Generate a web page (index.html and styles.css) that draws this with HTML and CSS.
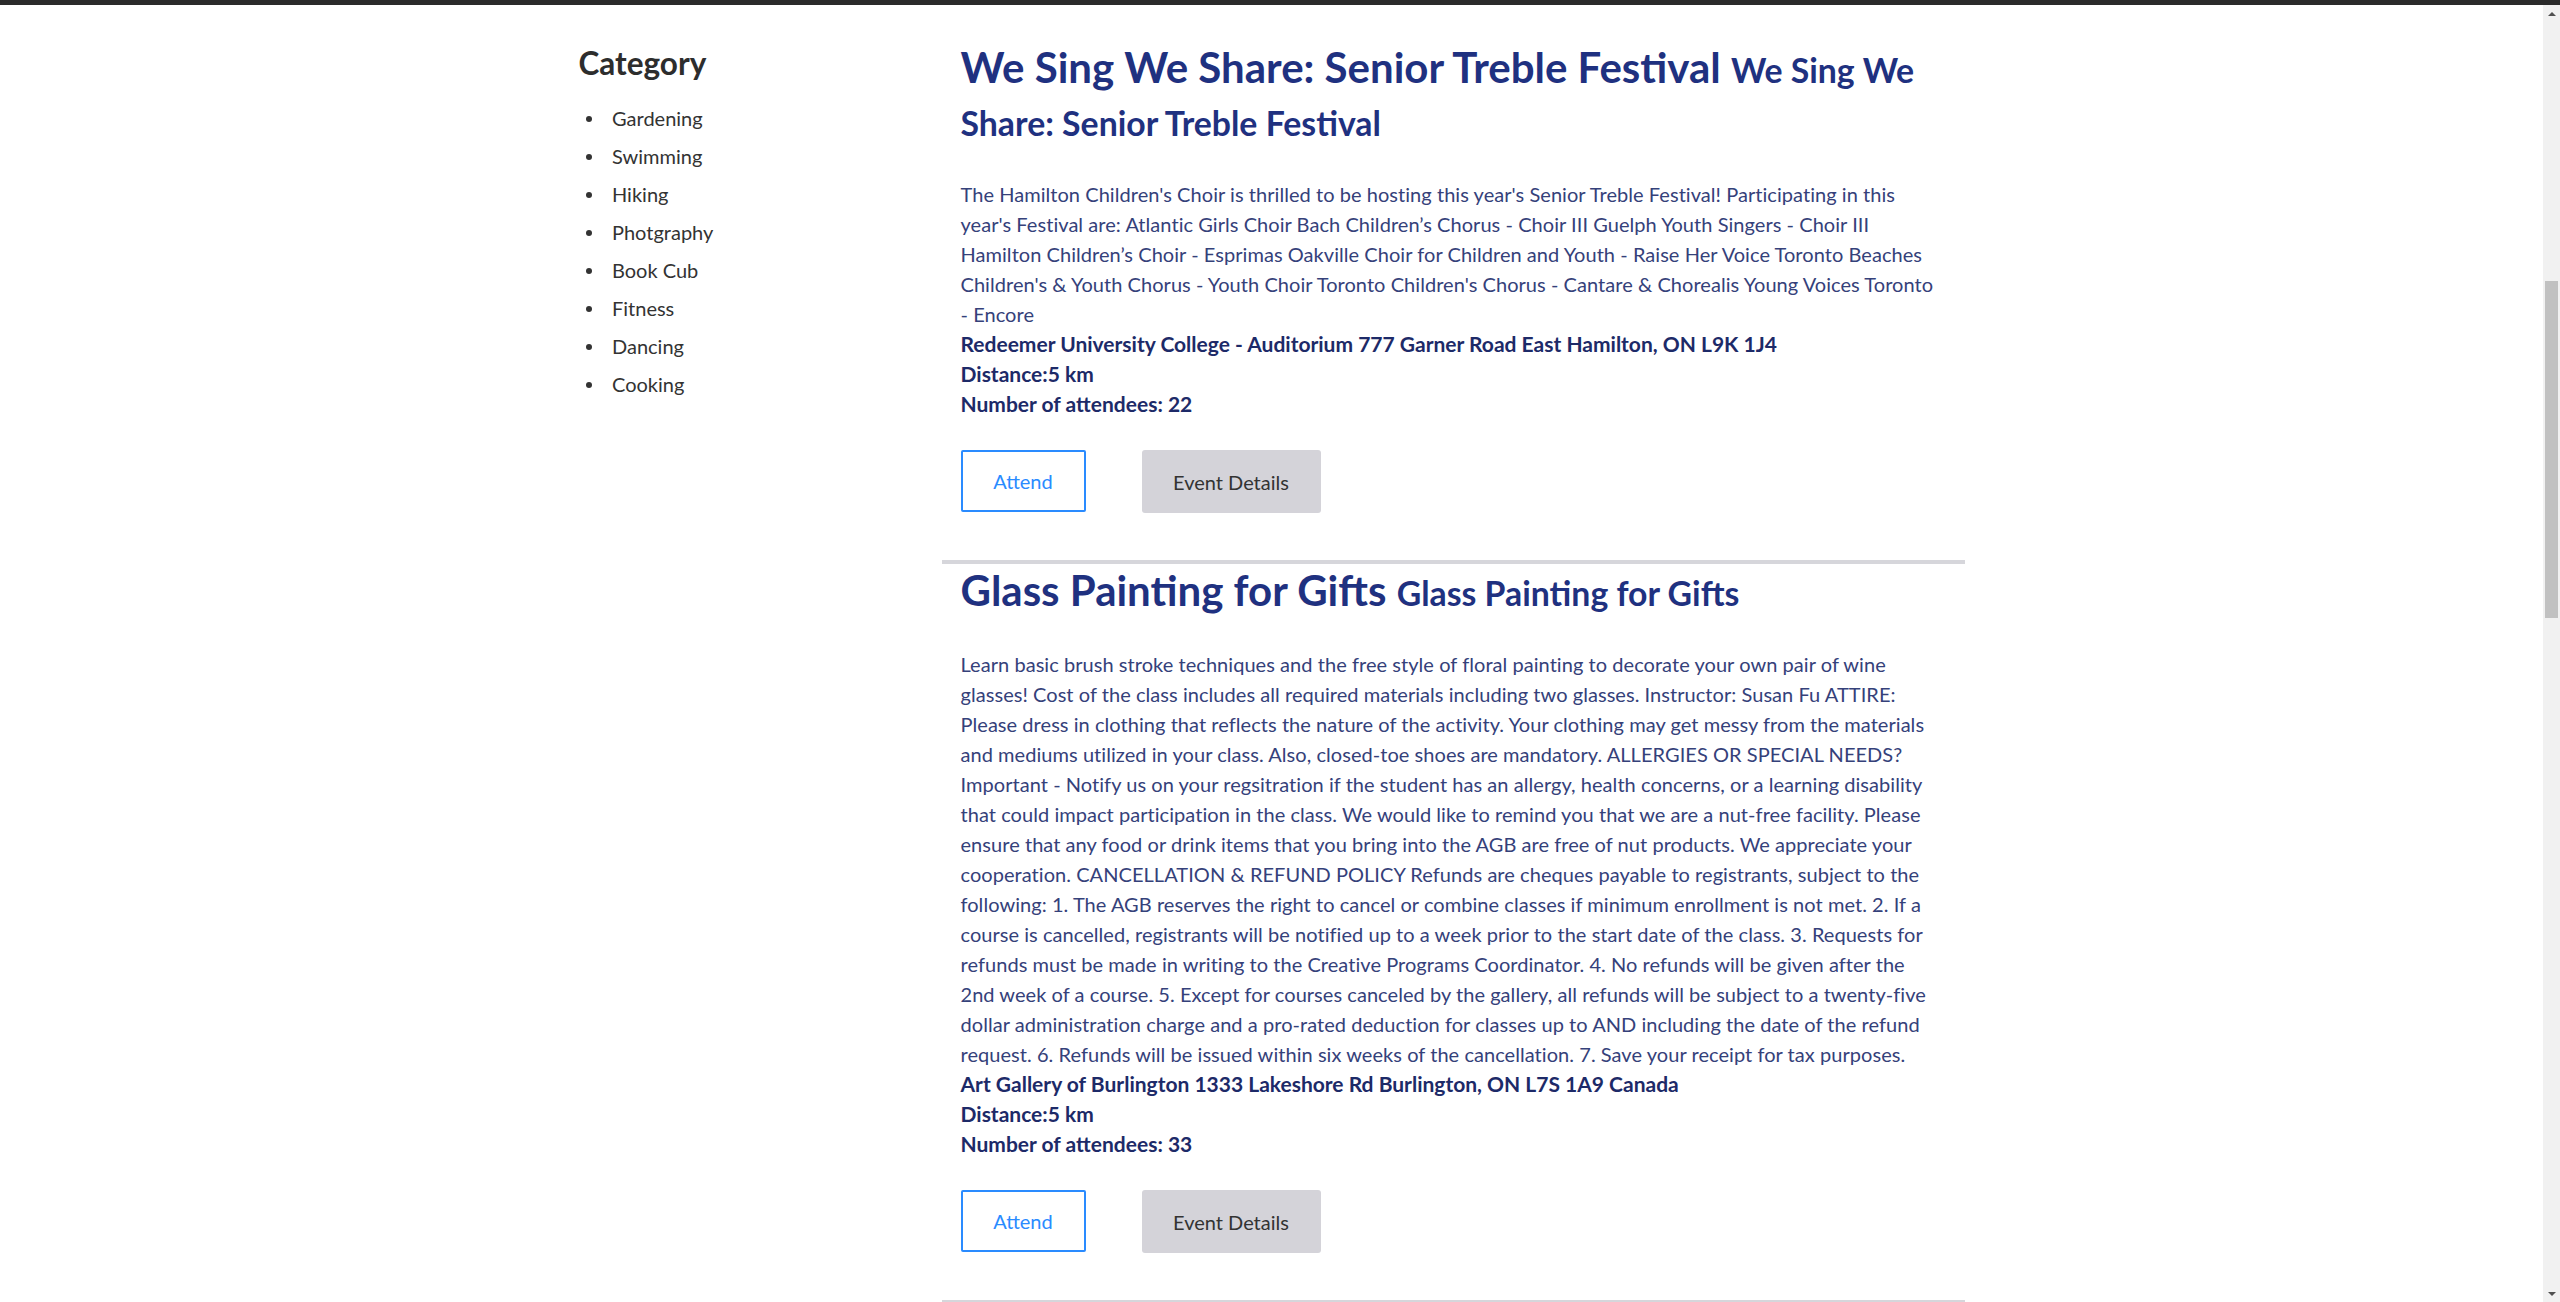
FILE: index.html
```html
<!DOCTYPE html>
<html lang="en">
<head>
<meta charset="utf-8">
<title>Events</title>
<link rel="stylesheet" href="styles.css">
</head>
<body>
<div class="topbar"></div>
<div class="viewport">
  <div class="page">
    <div class="container">
      <aside class="sidebar">
        <h3 class="cat-title">Category</h3>
        <ul class="cat-list">
          <li>Gardening</li>
          <li>Swimming</li>
          <li>Hiking</li>
          <li>Photgraphy</li>
          <li>Book Cub</li>
          <li>Fitness</li>
          <li>Dancing</li>
          <li>Cooking</li>
        </ul>
      </aside>
      <main class="events">
        <section class="event">
          <h2 class="event-title">We Sing We Share: Senior Treble Festival <span class="event-sub">We Sing We Share: Senior Treble Festival</span></h2>
          <p class="event-desc">The Hamilton Children's Choir is thrilled to be hosting this year's Senior Treble Festival! Participating in this year's Festival are: Atlantic Girls Choir Bach Children’s Chorus - Choir III Guelph Youth Singers - Choir III Hamilton Children’s Choir - Esprimas Oakville Choir for Children and Youth - Raise Her Voice Toronto Beaches Children's &amp; Youth Chorus - Youth Choir Toronto Children's Chorus - Cantare &amp; Chorealis Young Voices Toronto <span class="nowrap">- Encore</span></p>
          <div class="event-info">Redeemer University College - Auditorium 777 Garner Road East Hamilton, ON L9K 1J4</div>
          <div class="event-info">Distance:5 km</div>
          <div class="event-info">Number of attendees: 22</div>
          <div class="event-actions">
            <button class="btn btn-attend">Attend</button>
            <button class="btn btn-details">Event Details</button>
          </div>
        </section>
        <section class="event">
          <h2 class="event-title">Glass Painting for Gifts <span class="event-sub">Glass Painting for Gifts</span></h2>
          <p class="event-desc">Learn basic brush stroke techniques and the free style of floral painting to decorate your own pair of wine glasses! Cost of the class includes all required materials including two glasses. Instructor: Susan Fu ATTIRE: Please dress in clothing that reflects the nature of the activity. Your clothing may get messy from the materials and mediums utilized in your class. Also, closed-toe shoes are mandatory. ALLERGIES OR SPECIAL NEEDS? Important - Notify us on your regsitration if the student has an allergy, health concerns, or a learning disability that could impact participation in the class. We would like to remind you that we are a nut-free facility. Please ensure that any food or drink items that you bring into the AGB are free of nut products. We appreciate your cooperation. CANCELLATION &amp; REFUND POLICY Refunds are cheques payable to registrants, subject to the following: 1. The AGB reserves the right to cancel or combine classes if minimum enrollment is not met. 2. If a course is cancelled, registrants will be notified up to a week prior to the start date of the class. 3. Requests for refunds must be made in writing to the Creative Programs Coordinator. 4. No refunds will be given after the <span class="nowrap">2nd week</span> of a course. 5. Except for courses canceled by the gallery, all refunds will be subject to a <span class="nowrap">twenty-five</span> dollar administration charge and a pro-rated deduction for classes up to AND including the date of the refund request. 6. Refunds will be issued within six weeks of the cancellation. 7. Save your receipt for tax purposes.</p>
          <div class="event-info">Art Gallery of Burlington 1333 Lakeshore Rd Burlington, ON L7S 1A9 Canada</div>
          <div class="event-info">Distance:5 km</div>
          <div class="event-info">Number of attendees: 33</div>
          <div class="event-actions">
            <button class="btn btn-attend">Attend</button>
            <button class="btn btn-details">Event Details</button>
          </div>
        </section>
      </main>
    </div>
  </div>
  <div class="scrollbar">
    <div class="sb-btn"><span class="sb-up"></span></div>
    <div class="sb-track"><div class="sb-thumb"></div></div>
    <div class="sb-btn"><span class="sb-down"></span></div>
  </div>
</div>
</body>
</html>
```
FILE: styles.css
```css
html, body {
  margin: 0;
  padding: 0;
  height: 100%;
  overflow: hidden;
  background: #ffffff;
  font-family: "Lato", "Open Sans", sans-serif;
}

.topbar {
  height: 5px;
  background: #2b2b2b;
}

.viewport {
  display: flex;
  height: 1297px;
}

.page {
  flex: 1;
  overflow: hidden;
}

.container {
  width: 1386px;
  margin: 0 auto;
  display: grid;
  grid-template-columns: 363px 1023px;
}

/* Sidebar */
.sidebar {
  padding-top: 38px;
  color: #333333;
}

.cat-title {
  margin: 0;
  font-size: 31.5px;
  line-height: 40px;
  font-weight: 700;
  color: #2d2d2d;
}

.cat-list {
  list-style: none;
  margin: 16px 0 0;
  padding: 0;
}

.cat-list li {
  display: flex;
  font-size: 20px;
  line-height: 38px;
  color: #333333;
}

.cat-list li::before {
  content: "";
  flex: none;
  width: 6px;
  height: 6px;
  border-radius: 50%;
  background: #333333;
  margin: 17px 20px 0 7.5px;
}

/* Events */
.events {
  padding-top: 36px;
}

.event {
  padding: 0 18px 47px 19px;
  border-bottom: 4px solid #d6d6db;
}

.event-title {
  margin: 0;
  font-size: 42px;
  line-height: 53px;
  font-weight: 700;
  color: #1f3180;
}

.event-sub {
  font-size: 33.8px;
  line-height: 1;
}

.event-desc {
  margin: 32px 0 0;
  font-size: 20px;
  line-height: 30px;
  letter-spacing: 0.05px;
  color: #35417a;
}

.nowrap {
  white-space: nowrap;
}

.event-info {
  font-size: 21px;
  line-height: 30px;
  font-weight: 700;
  color: #1d2a68;
}

.event-actions {
  display: flex;
  align-items: flex-start;
  gap: 56px;
  margin-top: 31px;
}

.btn {
  display: flex;
  align-items: center;
  justify-content: center;
  font-family: "Lato", "Open Sans", sans-serif;
  font-size: 20px;
  padding: 0;
  cursor: pointer;
}

.btn-attend {
  width: 125px;
  height: 62px;
  background: #ffffff;
  border: 2px solid #2a8bff;
  border-radius: 2px;
  color: #2a8bff;
}

.btn-details {
  width: 179px;
  height: 63px;
  background: #d4d3d9;
  border: none;
  border-radius: 3px;
  color: #333333;
}

/* Scrollbar */
.scrollbar {
  width: 17px;
  flex: none;
  background: #f1f1f1;
  display: flex;
  flex-direction: column;
}

.sb-btn {
  height: 17px;
  display: flex;
  align-items: center;
  justify-content: center;
  flex: none;
}

.sb-up {
  width: 0;
  height: 0;
  border-left: 4px solid transparent;
  border-right: 4px solid transparent;
  border-bottom: 4px solid #505050;
}

.sb-down {
  width: 0;
  height: 0;
  border-left: 4px solid transparent;
  border-right: 4px solid transparent;
  border-top: 4px solid #505050;
}

.sb-track {
  flex: 1;
  padding: 259px 2px 0;
}

.sb-thumb {
  height: 337px;
  background: #c1c1c1;
}
```
